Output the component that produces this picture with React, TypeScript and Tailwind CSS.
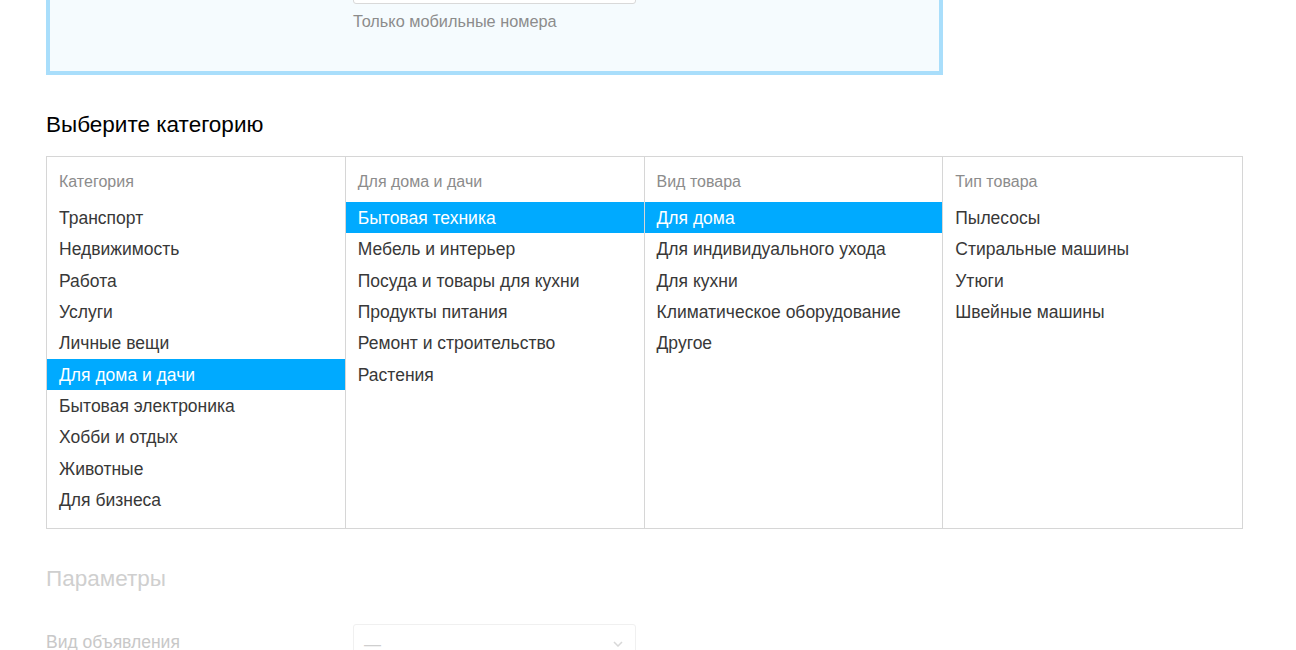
const columns = [
  {
    title: "Категория",
    selected: 5,
    items: [
      "Транспорт",
      "Недвижимость",
      "Работа",
      "Услуги",
      "Личные вещи",
      "Для дома и дачи",
      "Бытовая электроника",
      "Хобби и отдых",
      "Животные",
      "Для бизнеса",
    ],
  },
  {
    title: "Для дома и дачи",
    selected: 0,
    items: [
      "Бытовая техника",
      "Мебель и интерьер",
      "Посуда и товары для кухни",
      "Продукты питания",
      "Ремонт и строительство",
      "Растения",
    ],
  },
  {
    title: "Вид товара",
    selected: 0,
    items: [
      "Для дома",
      "Для индивидуального ухода",
      "Для кухни",
      "Климатическое оборудование",
      "Другое",
    ],
  },
  {
    title: "Тип товара",
    selected: -1,
    items: ["Пылесосы", "Стиральные машины", "Утюги", "Швейные машины"],
  },
];

export default function App() {
  return (
    <div className="h-[650px] overflow-hidden bg-white font-['Liberation_Sans',Arial,sans-serif]">
      <div className="ml-[46px] w-[1197px]">
        {/* contact box, scrolled mostly out of view */}
        <div className="-mt-[62px] w-[897px] border-4 border-[#a9defb] bg-[#f5fbfe] pl-[303px] pt-[20px] pb-[40px]">
          <div className="h-[42px] w-[283px] rounded-[3px] border border-[#d9d9d9] bg-white" />
          <p className="mt-[7px] text-[16.3px] leading-[20px] text-[#8c8c8c]">Только мобильные номера</p>
        </div>

        <h2 className="mt-[36px] text-[22.5px] leading-[28px] text-black">Выберите категорию</h2>

        <div className="mt-[17px] grid grid-cols-4 divide-x divide-[#d6d6d6] border border-[#d6d6d6]">
          {columns.map((col) => (
            <div key={col.title} className="pt-[15px] pb-[13px]">
              <div className="mb-[10px] px-[12px] text-[16px] leading-[20px] text-[#8c8c8c]">{col.title}</div>
              <ul>
                {col.items.map((item, i) => (
                  <li
                    key={item}
                    className={
                      i === col.selected
                        ? "h-[31.33px] bg-[#00aaff] px-[12px] pt-px text-[17.5px] leading-[31.33px] text-white"
                        : "h-[31.33px] px-[12px] pt-px text-[17.5px] leading-[31.33px] text-[#383838]"
                    }
                  >
                    {item}
                  </li>
                ))}
              </ul>
            </div>
          ))}
        </div>

        <h2 className="mt-[36px] text-[22.5px] leading-[28px] text-[#cfcfcf]">Параметры</h2>

        <div className="mt-[31px] flex items-start">
          <div className="w-[307px] pt-[6px] text-[17.5px] leading-[24px] text-[#c8c8c8]">Вид объявления</div>
          <div className="flex h-[40px] w-[283px] items-center justify-between rounded-[3px] border border-[#f0f0f0] px-[10px]">
            <span className="text-[17px] text-[#cfcfcf]">—</span>
            <svg width="10" height="6" viewBox="0 0 10 6" fill="none" className="mr-[2px]">
              <path d="M1 1l4 4 4-4" stroke="#d8d8d8" strokeWidth="1.5" />
            </svg>
          </div>
        </div>
      </div>
    </div>
  );
}
